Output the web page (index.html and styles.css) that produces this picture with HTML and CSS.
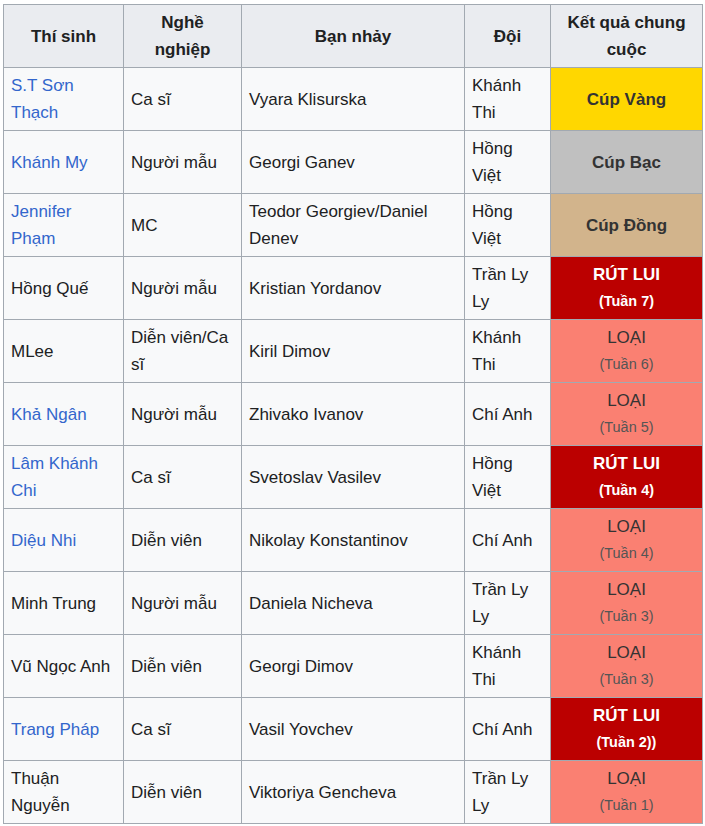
FILE: index.html
```html
<!DOCTYPE html>
<html lang="vi">
<head>
<meta charset="utf-8">
<link rel="stylesheet" href="styles.css">
</head>
<body>
<table class="wikitable">
  <colgroup>
    <col class="c1"><col class="c2"><col class="c3"><col class="c4"><col class="c5">
  </colgroup>
  <thead>
    <tr><th>Thí sinh</th><th>Nghề nghiệp</th><th>Bạn nhảy</th><th>Đội</th><th>Kết quả chung cuộc</th></tr>
  </thead>
  <tbody>
    <tr><td><a href="#">S.T Sơn Thạch</a></td><td>Ca sĩ</td><td>Vyara Klisurska</td><td>Khánh Thi</td><td class="res gold">Cúp Vàng</td></tr>
    <tr><td><a href="#">Khánh My</a></td><td>Người mẫu</td><td>Georgi Ganev</td><td>Hồng Việt</td><td class="res silver">Cúp Bạc</td></tr>
    <tr><td><a href="#">Jennifer Phạm</a></td><td>MC</td><td>Teodor Georgiev/Daniel Denev</td><td>Hồng Việt</td><td class="res bronze">Cúp Đồng</td></tr>
    <tr><td>Hồng Quế</td><td>Người mẫu</td><td>Kristian Yordanov</td><td>Trần Ly Ly</td><td class="res wd">RÚT LUI<small>(Tuần 7)</small></td></tr>
    <tr><td>MLee</td><td>Diễn viên/Ca sĩ</td><td>Kiril Dimov</td><td>Khánh Thi</td><td class="res out">LOẠI<small>(Tuần 6)</small></td></tr>
    <tr><td><a href="#">Khả Ngân</a></td><td>Người mẫu</td><td>Zhivako Ivanov</td><td>Chí Anh</td><td class="res out">LOẠI<small>(Tuần 5)</small></td></tr>
    <tr><td><a href="#">Lâm Khánh Chi</a></td><td>Ca sĩ</td><td>Svetoslav Vasilev</td><td>Hồng Việt</td><td class="res wd">RÚT LUI<small>(Tuần 4)</small></td></tr>
    <tr><td><a href="#">Diệu Nhi</a></td><td>Diễn viên</td><td>Nikolay Konstantinov</td><td>Chí Anh</td><td class="res out">LOẠI<small>(Tuần 4)</small></td></tr>
    <tr><td>Minh Trung</td><td>Người mẫu</td><td>Daniela Nicheva</td><td>Trần Ly Ly</td><td class="res out">LOẠI<small>(Tuần 3)</small></td></tr>
    <tr><td>Vũ Ngọc Anh</td><td>Diễn viên</td><td>Georgi Dimov</td><td>Khánh Thi</td><td class="res out">LOẠI<small>(Tuần 3)</small></td></tr>
    <tr><td><a href="#">Trang Pháp</a></td><td>Ca sĩ</td><td>Vasil Yovchev</td><td>Chí Anh</td><td class="res wd">RÚT LUI<small>(Tuần 2))</small></td></tr>
    <tr><td>Thuận Nguyễn</td><td>Diễn viên</td><td>Viktoriya Gencheva</td><td>Trần Ly Ly</td><td class="res out">LOẠI<small>(Tuần 1)</small></td></tr>
  </tbody>
</table>
</body>
</html>
```

FILE: styles.css
```css
html, body {
  margin: 0;
  padding: 0;
  background: #ffffff;
}
body {
  padding: 4px 0 0 3px;
  font-family: "Liberation Sans", Arial, sans-serif;
  font-size: 17px;
  line-height: 27px;
  color: #202122;
}
.wikitable {
  border-collapse: collapse;
  table-layout: fixed;
  width: 699px;
  background: #f8f9fa;
  color: #202122;
  border: 1px solid #a2a9b1;
}
.c1 { width: 120px; }
.c2 { width: 118px; }
.c3 { width: 223px; }
.c4 { width: 86px; }
.c5 { width: 152px; }
.wikitable th,
.wikitable td {
  border: 1px solid #a2a9b1;
  padding: 4px 7px;
  height: 54px;
  vertical-align: middle;
}
.wikitable th {
  background: #eaecf0;
  font-weight: bold;
  text-align: center;
  padding: 4px 9px;
}
.wikitable td {
  text-align: left;
}
.wikitable a {
  color: #3366cc;
  text-decoration: none;
}
.wikitable td.res {
  text-align: center;
  color: #333333;
}
.wikitable small {
  display: block;
  font-size: 85%;
  line-height: 27px;
}
.gold { background: #ffd700; font-weight: bold; }
.silver { background: #c0c0c0; font-weight: bold; }
.bronze { background: #d2b48c; font-weight: bold; }
.wikitable td.wd {
  background: #bb0000;
  color: #ffffff;
  font-weight: bold;
}
.wikitable td.out {
  background: #fa8072;
  color: #333333;
}
.wikitable td.out small {
  color: #555555;
}
```
